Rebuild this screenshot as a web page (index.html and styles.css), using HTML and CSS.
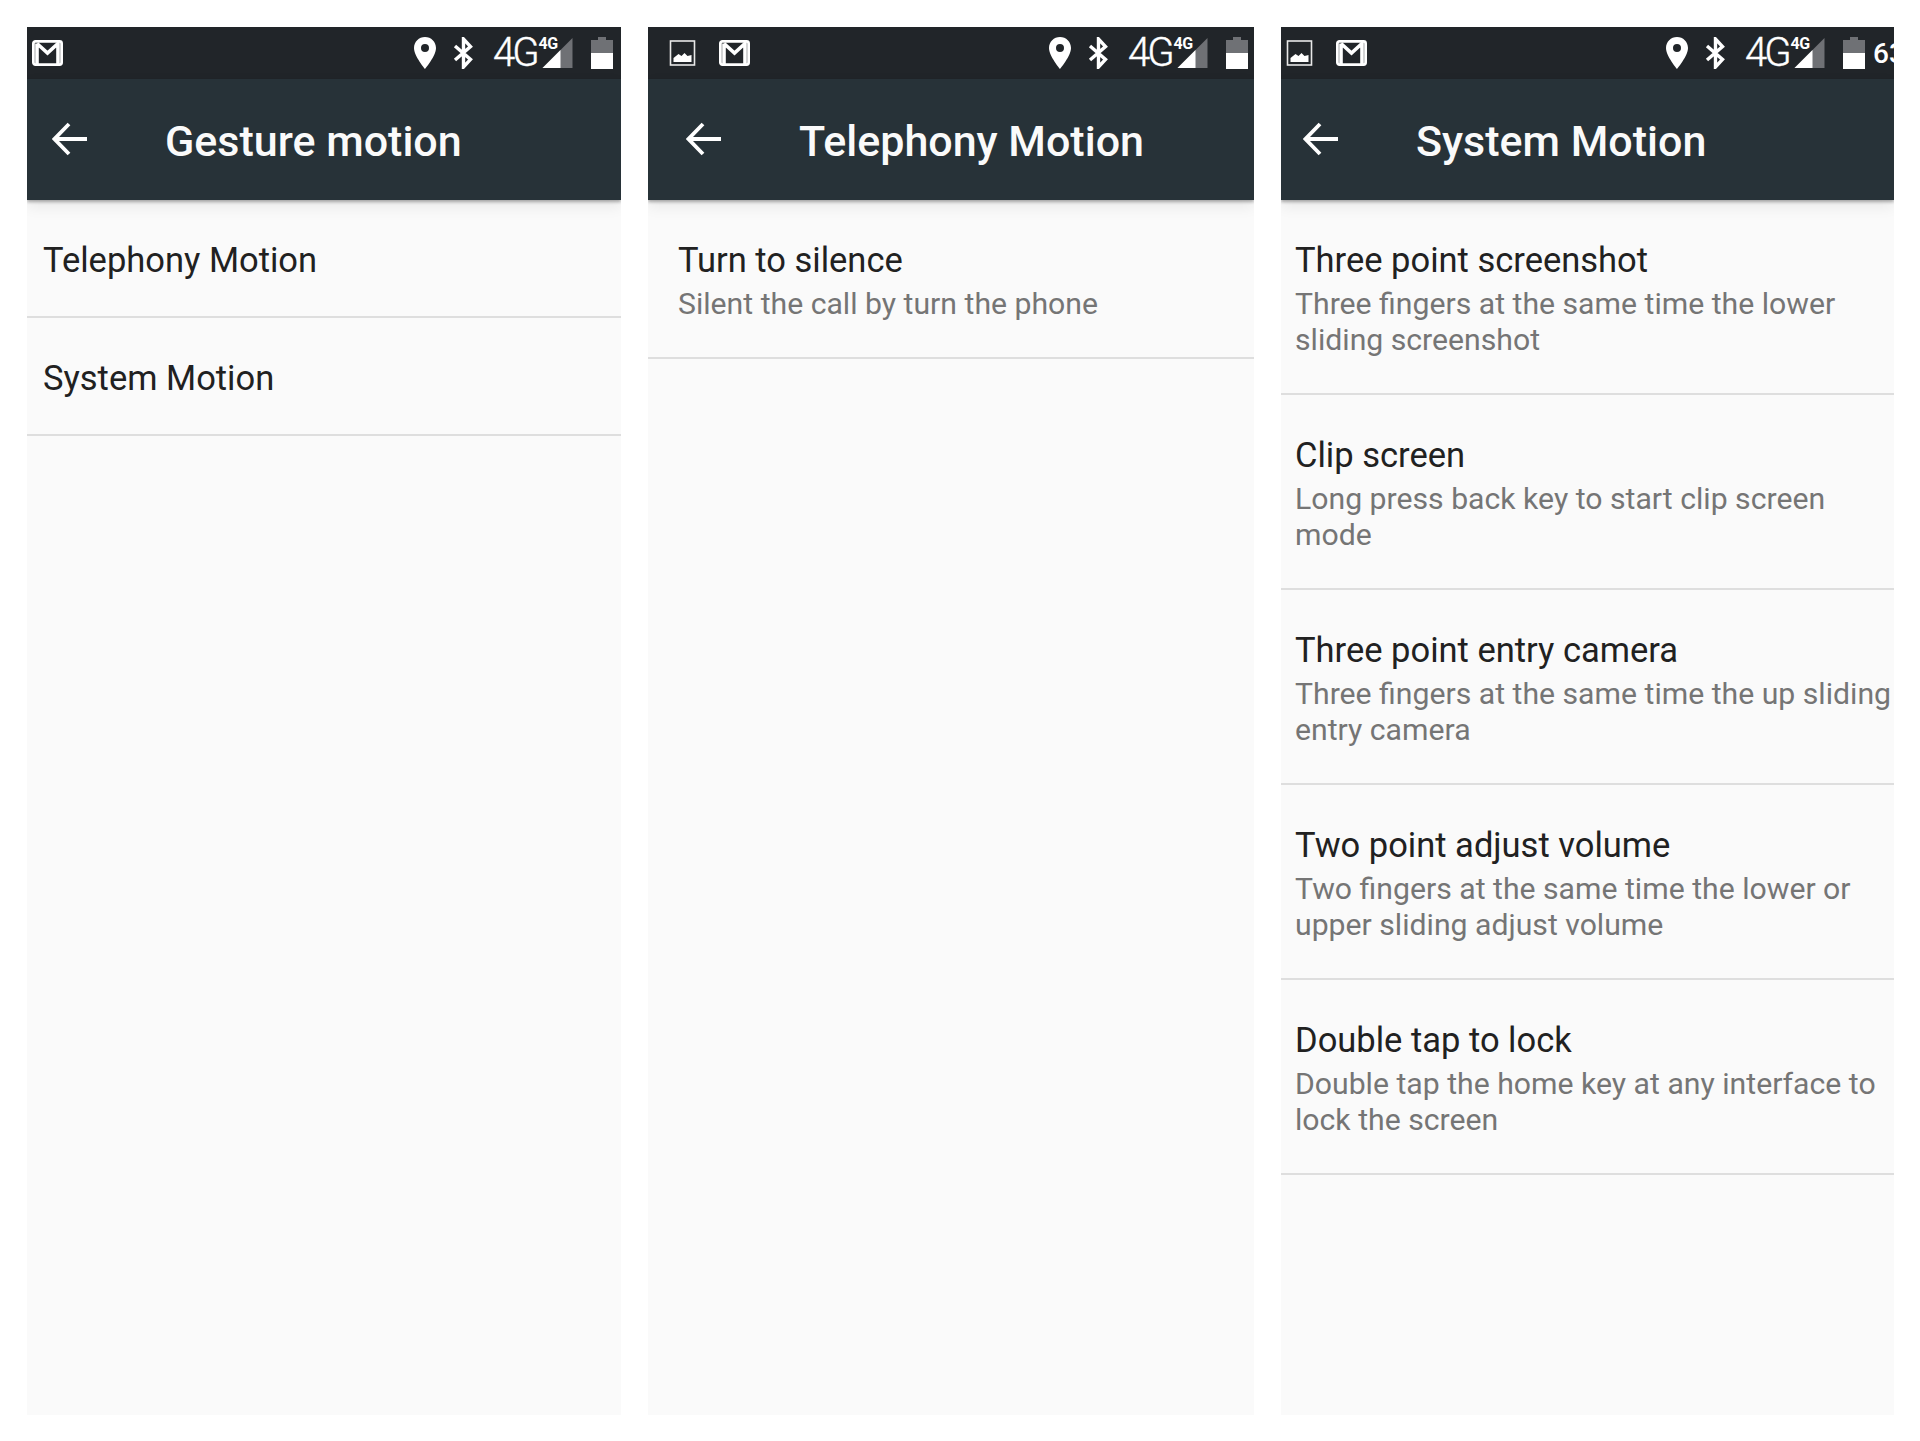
FILE: index.html
```html
<!DOCTYPE html>
<html lang="en">
<head>
    <meta charset="UTF-8">
    <title>Gesture settings</title>
    <link rel="stylesheet" href="styles.css">
</head>
<body>
    <svg class="icon-defs" width="0" height="0">
        <symbol id="i-mail" viewBox="0 0 31 26">
            <rect x="1.4" y="1.4" width="28.2" height="23.2" rx="2" fill="none" stroke="#fff" stroke-width="2.8"/>
            <path d="M5 3.5 L15.5 13 L26 3.5 V24 M5 3.5 V24" fill="none" stroke="#fff" stroke-width="3.6"/>
        </symbol>
        <symbol id="i-image" viewBox="0 0 26 26">
            <rect x="1" y="1" width="24" height="24" fill="none" stroke="#e8e8e8" stroke-width="1.6"/>
            <path d="M4 22 V18 L9 14 L12 16 L15 13 L18 16 L22 15 V22 Z" fill="#fff"/>
        </symbol>
        <symbol id="i-pin" viewBox="0 0 22 32">
            <path fill-rule="evenodd" d="M11 0 C4.9 0 0 4.9 0 11 C0 19 11 32 11 32 C11 32 22 19 22 11 C22 4.9 17.1 0 11 0 Z M11 7 A4 4 0 1 1 11 15 A4 4 0 0 1 11 7 Z" fill="#fff"/>
        </symbol>
        <symbol id="i-bt" viewBox="0 0 20 32">
            <path d="M1.5 9 L17 22.5 L10 30 V2 L17 9.5 L1.5 23" fill="none" stroke="#fff" stroke-width="3.4"/>
        </symbol>
        <symbol id="i-signal" viewBox="0 0 30 30">
            <path d="M30 0 V30 H0 Z" fill="#6f7175"/>
            <path d="M18 12 V30 H0 Z" fill="#fff"/>
        </symbol>
        <symbol id="i-battery" viewBox="0 0 22 32">
            <path d="M7 0 H15 V3 H22 V16 H0 V3 H7 Z" fill="#6f7175"/>
            <rect y="16" width="22" height="16" fill="#fff"/>
        </symbol>
        <symbol id="i-back" viewBox="0 0 36 34">
            <path d="M35 17 H3 M17 2 L2.5 17 L17 32" fill="none" stroke="#fff" stroke-width="3.8"/>
        </symbol>
    </svg>

    <main class="screens">
        <section class="phone phone-gesture">
            <div class="status-bar">
                <svg class="ic-mail"><use href="#i-mail"/></svg>
                <div class="status-right">
                    <svg class="ic-pin"><use href="#i-pin"/></svg>
                    <svg class="ic-bt"><use href="#i-bt"/></svg>
                    <span class="net">4G<small>4G</small></span>
                    <svg class="ic-signal"><use href="#i-signal"/></svg>
                    <svg class="ic-battery"><use href="#i-battery"/></svg>
                </div>
            </div>
            <header class="app-bar">
                <svg class="ic-back"><use href="#i-back"/></svg>
                <h1>Gesture motion</h1>
            </header>
            <ul class="list">
                <li class="row row-single"><span class="row-title">Telephony Motion</span></li>
                <li class="row row-single"><span class="row-title">System Motion</span></li>
            </ul>
        </section>

        <section class="phone phone-telephony">
            <div class="status-bar">
                <svg class="ic-image"><use href="#i-image"/></svg>
                <svg class="ic-mail"><use href="#i-mail"/></svg>
                <div class="status-right">
                    <svg class="ic-pin"><use href="#i-pin"/></svg>
                    <svg class="ic-bt"><use href="#i-bt"/></svg>
                    <span class="net">4G<small>4G</small></span>
                    <svg class="ic-signal"><use href="#i-signal"/></svg>
                    <svg class="ic-battery"><use href="#i-battery"/></svg>
                </div>
            </div>
            <header class="app-bar">
                <svg class="ic-back"><use href="#i-back"/></svg>
                <h1>Telephony Motion</h1>
            </header>
            <ul class="list">
                <li class="row row-short">
                    <span class="row-title">Turn to silence</span>
                    <span class="row-sub">Silent the call by turn the phone</span>
                </li>
            </ul>
        </section>

        <section class="phone phone-system">
            <div class="status-bar">
                <svg class="ic-image"><use href="#i-image"/></svg>
                <svg class="ic-mail"><use href="#i-mail"/></svg>
                <div class="status-right">
                    <svg class="ic-pin"><use href="#i-pin"/></svg>
                    <svg class="ic-bt"><use href="#i-bt"/></svg>
                    <span class="net">4G<small>4G</small></span>
                    <svg class="ic-signal"><use href="#i-signal"/></svg>
                    <svg class="ic-battery"><use href="#i-battery"/></svg>
                    <span class="percent">63</span>
                </div>
            </div>
            <header class="app-bar">
                <svg class="ic-back"><use href="#i-back"/></svg>
                <h1>System Motion</h1>
            </header>
            <ul class="list">
                <li class="row">
                    <span class="row-title">Three point screenshot</span>
                    <span class="row-sub">Three fingers at the same time the lower<br>sliding screenshot</span>
                </li>
                <li class="row">
                    <span class="row-title">Clip screen</span>
                    <span class="row-sub">Long press back key to start clip screen<br>mode</span>
                </li>
                <li class="row">
                    <span class="row-title">Three point entry camera</span>
                    <span class="row-sub">Three fingers at the same time the up sliding<br>entry camera</span>
                </li>
                <li class="row">
                    <span class="row-title">Two point adjust volume</span>
                    <span class="row-sub">Two fingers at the same time the lower or<br>upper sliding adjust volume</span>
                </li>
                <li class="row">
                    <span class="row-title">Double tap to lock</span>
                    <span class="row-sub">Double tap the home key at any interface to<br>lock the screen</span>
                </li>
            </ul>
        </section>
    </main>
</body>
</html>
```

FILE: styles.css
```css
html, body {
    margin: 0;
    background: #fff;
}

body {
    font-family: Roboto, "Liberation Sans", sans-serif;
}

.icon-defs {
    display: block;
    height: 0;
}

.screens {
    display: grid;
    grid-template-columns: 594px 606px 613px;
    column-gap: 27px;
    padding: 27px 0 0 27px;
}

.phone {
    height: 1388px;
    background: #fafafa;
    overflow: hidden;
    display: flex;
    flex-direction: column;
}

/* status bar */
.status-bar {
    height: 52px;
    flex-shrink: 0;
    background: #212529;
    display: flex;
    align-items: center;
    box-sizing: border-box;
    overflow: hidden;
}

.status-right {
    display: flex;
    align-items: center;
    margin-left: auto;
    flex-shrink: 0;
}

.ic-mail {
    width: 31px;
    height: 26px;
    margin-left: 5px;
}

.ic-image {
    width: 27px;
    height: 26px;
    margin-left: 21px;
}

.ic-image + .ic-mail {
    margin-left: 23px;
}

.phone-system .ic-image {
    margin-left: 5px;
}

.ic-pin {
    width: 22px;
    height: 32px;
}

.ic-bt {
    width: 21px;
    height: 32px;
    margin-left: 17px;
}

.net {
    display: flex;
    align-items: flex-start;
    margin-left: 19px;
    width: 46px;
    color: #fff;
    font-size: 40px;
    font-weight: 300;
    line-height: 32px;
    letter-spacing: -3px;
    -webkit-text-stroke: 0.4px #fff;
}

.net small {
    font-size: 16px;
    font-weight: 700;
    line-height: 14px;
    letter-spacing: -0.5px;
    margin-left: 2px;
    flex-shrink: 0;
    -webkit-text-stroke: 0;
}

.ic-signal {
    width: 31px;
    height: 30px;
    margin-left: 3px;
}

.ic-battery {
    width: 22px;
    height: 32px;
    margin-left: 18px;
    margin-right: 8px;
}

.phone-telephony .ic-battery {
    margin-right: 6px;
}

.percent {
    color: #fff;
    font-size: 28px;
    font-weight: 500;
    width: 21px;
    overflow: hidden;
    white-space: nowrap;
}

/* title bar */
.app-bar {
    height: 121px;
    flex-shrink: 0;
    background: #273238;
    display: flex;
    align-items: center;
    box-shadow: 0 2px 3px rgba(0, 0, 0, 0.3), 0 6px 14px rgba(0, 0, 0, 0.08);
    position: relative;
}

.ic-back {
    width: 36px;
    height: 34px;
    margin-left: 25px;
    margin-bottom: 2px;
}

.phone-telephony .ic-back {
    margin-left: 38px;
}

.phone-system .ic-back {
    margin-left: 22px;
}

.app-bar h1 {
    margin: 2px 0 0 77px;
    color: #fafafa;
    font-size: 43px;
    font-weight: 500;
}

/* list */
.list {
    list-style: none;
    margin: 0;
    padding: 0;
}

.row {
    height: 195px;
    box-sizing: border-box;
    padding: 40px 0 0 14px;
    border-bottom: 2px solid #dedede;
    display: flex;
    flex-direction: column;
}

.row-single {
    height: 118px;
    padding-left: 16px;
}

.row-short {
    height: 159px;
    padding-left: 30px;
}

.row-title {
    color: #212121;
    font-size: 34.5px;
    line-height: 40px;
}

.row-sub {
    color: #757575;
    font-size: 30.2px;
    line-height: 35.5px;
    margin-top: 6px;
    white-space: nowrap;
}
```
